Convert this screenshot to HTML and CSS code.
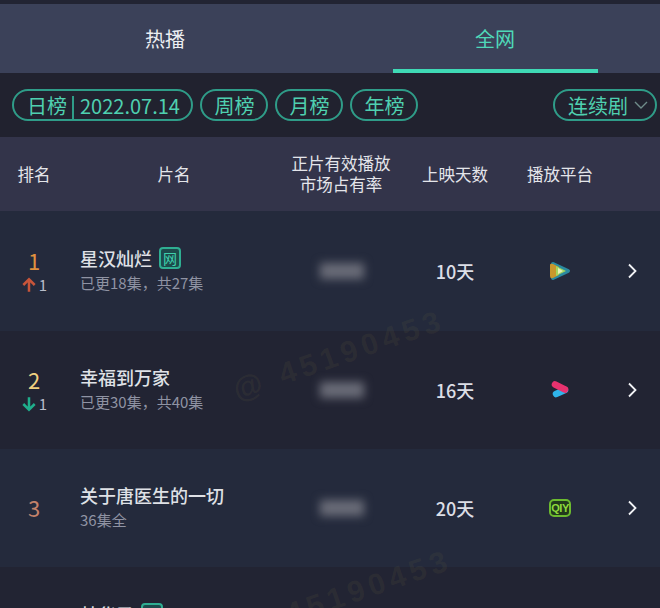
FILE: index.html
```html
<!DOCTYPE html>
<html lang="zh-CN">
<head>
    <meta charset="UTF-8">
    <title>全网热播榜</title>
    <link rel="stylesheet" href="styles.css">
</head>
<body>
    <div class="page">
        <div class="tabs">
            <div class="tab">热播</div>
            <div class="tab active">全网</div>
        </div>

        <div class="filters">
            <div class="pill pill-date">
                <span>日榜</span>
                <span class="pill-line"></span>
                <span>2022.07.14</span>
            </div>
            <div class="pill">周榜</div>
            <div class="pill">月榜</div>
            <div class="pill">年榜</div>
            <div class="pill pill-type">
                <span>连续剧</span>
                <svg class="caret" width="14" height="8" viewBox="0 0 14 8"><path d="M1 1l6 6 6-6" fill="none" stroke="#6f8c8a" stroke-width="1.4"/></svg>
            </div>
        </div>

        <div class="table-head">
            <div class="col-rank">排名</div>
            <div class="col-name">片名</div>
            <div class="col-share">正片有效播放<br>市场占有率</div>
            <div class="col-days">上映天数</div>
            <div class="col-platform">播放平台</div>
        </div>

        <div class="row row-light row-first">
            <div class="col-rank">
                <div class="rank rank-1">1</div>
                <div class="change">
                    <svg width="16" height="16" viewBox="0 0 14 14"><path d="M7 13V2M2 7l5-5 5 5" fill="none" stroke="#c8553a" stroke-width="2.2"/></svg>
                    <span>1</span>
                </div>
            </div>
            <div class="col-name title-cell">
                <div class="title">星汉灿烂<span class="tag">网</span></div>
                <div class="sub">已更18集，共27集</div>
            </div>
            <div class="col-share"><div class="smudge"></div></div>
            <div class="col-days days">10天</div>
            <div class="col-platform">
                <svg width="24" height="22" viewBox="0 0 24 22">
                    <path d="M5 4l15 7-15 7z" fill="#2a8aa0" stroke="#2a8aa0" stroke-width="4" stroke-linejoin="round"/>
                    <path d="M2 5q0-2 3-1l6 3v8l-6 3q-3 1-3-2z" fill="#c9982c"/>
                    <path d="M8 6l10 5-10 5z" fill="#a4d65e"/>
                    <path d="M10 8l5 3-5 3z" fill="#e6f2b8"/>
                </svg>
            </div>
            <div class="col-arrow"><svg width="10" height="16" viewBox="0 0 10 16"><path d="M2 1.500L8.500 8 2 14.500" fill="none" stroke="#f2f3f6" stroke-width="1.800"/></svg></div>
        </div>

        <div class="row">
            <div class="col-rank">
                <div class="rank rank-2">2</div>
                <div class="change">
                    <svg width="16" height="16" viewBox="0 0 14 14"><path d="M7 1v11M2 7l5 5 5-5" fill="none" stroke="#1fae8c" stroke-width="2.2"/></svg>
                    <span>1</span>
                </div>
            </div>
            <div class="col-name title-cell">
                <div class="title">幸福到万家</div>
                <div class="sub">已更30集，共40集</div>
            </div>
            <div class="col-share"><div class="smudge"></div></div>
            <div class="col-days days">16天</div>
            <div class="col-platform">
                <svg width="20" height="20" viewBox="0 0 20 20">
                    <path d="M6 14l9-4" stroke="#2fb4ea" stroke-width="6.500" stroke-linecap="round"/>
                    <path d="M5 4.500l10 5" stroke="#e8326f" stroke-width="6.500" stroke-linecap="round"/>
                </svg>
            </div>
            <div class="col-arrow"><svg width="10" height="16" viewBox="0 0 10 16"><path d="M2 1.500L8.500 8 2 14.500" fill="none" stroke="#f2f3f6" stroke-width="1.800"/></svg></div>
        </div>

        <div class="row row-light">
            <div class="col-rank">
                <div class="rank rank-3">3</div>
            </div>
            <div class="col-name title-cell">
                <div class="title">关于唐医生的一切</div>
                <div class="sub">36集全</div>
            </div>
            <div class="col-share"><div class="smudge"></div></div>
            <div class="col-days days">20天</div>
            <div class="col-platform">
                <div class="iqiyi">QIY</div>
            </div>
            <div class="col-arrow"><svg width="10" height="16" viewBox="0 0 10 16"><path d="M2 1.500L8.500 8 2 14.500" fill="none" stroke="#f2f3f6" stroke-width="1.800"/></svg></div>
        </div>

        <div class="row">
            <div class="col-rank"></div>
            <div class="col-name title-cell title-only">
                <div class="title">梦华录<span class="tag">网</span></div>
            </div>
        </div>

        <div class="watermark wm-one"><span class="wm-at">@</span>45190453</div>
        <div class="watermark wm-two">45190453</div>
    </div>
</body>
</html>
```

FILE: styles.css
```css
* {
    margin: 0;
    padding: 0;
    box-sizing: border-box;
}

body {
    background: #22243a;
    font-family: 'Noto Sans CJK SC', 'Noto Sans', sans-serif;
    color: #e6e7ec;
    overflow: hidden;
}

.page {
    position: relative;
    width: 660px;
    height: 608px;
    overflow: hidden;
    background: #222433;
    padding-top: 4px;
}

.tabs {
    display: flex;
    height: 69px;
    background: #3b4159;
}

.tab {
    width: 330px;
    position: relative;
    text-align: center;
    font-size: 20px;
    line-height: 70px;
    color: #eceef2;
}

.tab.active {
    color: #4fd8b8;
}

.tab.active::after {
    content: '';
    position: absolute;
    left: 63px;
    bottom: 0;
    width: 205px;
    height: 4px;
    background: #3fd9b5;
}

.filters {
    display: flex;
    align-items: center;
    gap: 7px;
    height: 64px;
    padding: 0 3px 0 12px;
    background: #21222f;
}

.pill {
    display: flex;
    align-items: center;
    height: 32px;
    padding: 0 12px;
    border: 2px solid #2f9c88;
    border-radius: 16px;
    font-size: 20px;
    color: #4fd0b0;
}

.pill-date {
    padding: 0 11.500px 0 13px;
}

.pill-line {
    width: 2px;
    height: 24px;
    margin: 6px 6px 0 5px;
    background: #2f9c88;
}

.pill-type {
    margin-left: auto;
    padding: 0 7px 0 13px;
    gap: 6px;
}

.table-head {
    display: flex;
    align-items: center;
    height: 74px;
    background: #33344a;
    font-size: 16.500px;
    line-height: 21px;
    text-align: center;
    color: #e4e5ea;
}

.row {
    display: flex;
    align-items: center;
    height: 118px;
    background: #222433;
}

.row-light {
    background: #242a3c;
}

.row-first {
    height: 120px;
}

.col-rank {
    width: 68px;
    text-align: center;
}

.row .col-rank {
    margin-top: -2px;
}

.col-name {
    width: 212px;
}

.col-share {
    width: 122px;
    text-align: center;
}

.col-days {
    width: 106px;
}

.col-platform {
    width: 104px;
    display: flex;
    justify-content: center;
    align-items: center;
}

.col-arrow {
    display: flex;
    margin-left: 15px;
}

.title-cell {
    padding: 0 0 0 12px;
    margin-top: -5px;
}

.title-only {
    margin-top: -25px;
}

.rank {
    font-size: 22px;
    line-height: 30px;
}

.rank-1 {
    color: #e0913f;
}

.rank-2 {
    color: #efcf80;
}

.rank-3 {
    color: #c4826a;
}

.change {
    display: flex;
    justify-content: center;
    align-items: center;
    gap: 2px;
    font-size: 15px;
    line-height: 20px;
    color: #b9bdca;
}

.title {
    display: flex;
    align-items: center;
    font-size: 18px;
    line-height: 26px;
    font-weight: 500;
    color: #dfe1e6;
}

.tag {
    width: 22px;
    height: 22px;
    margin-left: 7px;
    border: 2px solid #2fae92;
    border-radius: 4px;
    background: #1d4a4c;
    color: #3fd0ac;
    font-size: 14px;
    line-height: 18px;
    text-align: center;
    font-weight: 400;
}

.sub {
    margin-top: 2px;
    font-size: 15px;
    line-height: 20px;
    color: #8f93a3;
}

.smudge {
    width: 44px;
    height: 16px;
    margin: 0 auto;
    transform: translateX(1px);
    background: #6a6c78;
    filter: blur(5px);
}

.days {
    text-align: center;
    font-size: 18px;
    font-weight: 500;
    color: #dcdee6;
}

.iqiyi {
    width: 22px;
    height: 18px;
    border: 2px solid #6cbb2f;
    border-radius: 5px;
    background: #223a1c;
    color: #8fdc3c;
    font-family: 'Liberation Sans', sans-serif;
    font-size: 11px;
    font-weight: 700;
    line-height: 14px;
    text-align: center;
    letter-spacing: -0.5px;
}

.watermark {
    position: absolute;
    font-family: 'Liberation Sans', sans-serif;
    font-size: 30px;
    font-weight: 700;
    letter-spacing: 5px;
    color: rgba(130, 125, 70, 0.11);
    transform: rotate(-19deg);
    white-space: nowrap;
}

.wm-at {
    margin-right: 14px;
}

.wm-one {
    left: 228px;
    top: 338px;
}

.wm-two {
    left: 282px;
    top: 570px;
}
```
